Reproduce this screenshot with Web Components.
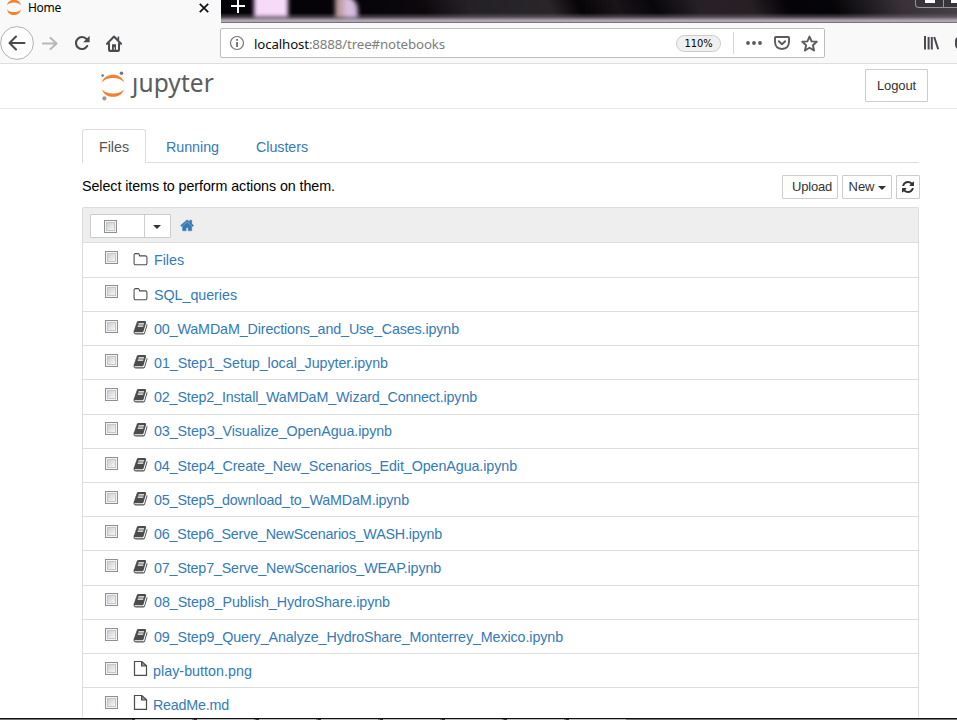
<!DOCTYPE html>
<html lang="en">
<head>
<meta charset="utf-8">
<title>Home</title>
<style>
html,body{margin:0;height:720px;overflow:hidden;background:#fff}
body{font-family:"Liberation Sans",Arial,sans-serif;font-size:14.3px;color:#000}
</style>
</head>
<body>
<browser-window></browser-window>
<script>
const define = (name, html, setup) => {
  const t = document.createElement('template');
  t.innerHTML = html;
  customElements.define(name, class extends HTMLElement {
    connectedCallback() {
      if (this.shadowRoot) return;
      const root = this.attachShadow({mode: 'open'});
      root.append(t.content.cloneNode(true));
      if (setup) setup(this, root);
    }
  });
};

/* Text run that spreads its tracking to fill a given width. */
define('fit-text', `<style>:host{display:inline-block;white-space:nowrap;line-height:1.2}span{display:inline-block}</style><span><slot></slot></span>`,
  (host, root) => {
    const s = root.querySelector('span'), w = +host.getAttribute('w');
    const n = host.textContent.length;
    if (w && n) { s.style.letterSpacing = ((w - s.getBoundingClientRect().width) / n) + 'px'; host.style.width = w + 'px'; }
  });

const ICONS = {
  home: ['0 0 1792 1792', '<path d="M1472 992v480q0 26-19 45t-45 19h-384v-384h-256v384h-384q-26 0-45-19t-19-45v-480q0-1 .5-3t.5-3l575-474 575 474q1 2 1 6zm223-69l-62 74q-8 9-21 11h-3q-13 0-21-7l-692-577-692 577q-12 8-24 7-13-2-21-11l-62-74q-8-10-7-23.5t11-21.5l719-599q32-26 76-26t76 26l244 204v-195q0-14 9-23t23-9h192q14 0 23 9t9 23v408l219 182q10 8 11 21.5t-7 23.5z" stroke="currentColor" stroke-width="50"/>'],
  folder: ['0 0 1792 1792', '<path d="M1600 1312v-704q0-40-28-68t-68-28h-704q-40 0-68-28t-28-68v-64q0-40-28-68t-68-28h-320q-40 0-68 28t-28 68v960q0 40 28 68t68 28h1216q40 0 68-28t28-68zm128-704v704q0 92-66 158t-158 66h-1216q-92 0-158-66t-66-158v-960q0-92 66-158t158-66h320q92 0 158 66t66 158v32h672q92 0 158 66t66 158z"/>'],
  book: ['0 0 1792 1792', '<path d="M1703 478q40 57 18 129l-275 906q-19 64-76.5 107.5t-122.5 43.5h-923q-77 0-148.5-53.5t-99.5-131.5q-24-67-2-127 0-4 3-27t4-37q1-8-3-21.5t-3-19.5q2-11 8-21t16.5-23.5 16.5-23.5q23-38 45-91.5t30-91.5q3-10 .5-30t-.5-28q3-11 17-28t17-23q21-36 42-92t25-90q1-9-2.5-32t.5-28q4-13 22-30.5t22-22.5q19-26 42.5-84.5t27.5-96.5q1-8-3-25.5t-2-26.5q2-8 9-18t18-23 17-21q8-12 16.5-30.5t15-35 16-36 19.5-32 26.5-23.5 36-11.5 47.5 5.5l-1 3q38-9 51-9h761q74 0 114 56t18 130l-274 906q-36 119-71.5 153.5t-128.5 34.5h-869q-27 0-38 15-11 16-1 43 24 70 144 70h923q29 0 56-15.5t35-41.5l300-987q7-22 5-57 38 15 59 43zm-1064 2q-4 13 2 22.5t20 9.5h608q13 0 25.5-9.5t16.5-22.5l21-64q4-13-2-22.5t-20-9.5h-608q-13 0-25.5 9.5t-16.5 22.5zm-83 256q-4 13 2 22.5t20 9.5h608q13 0 25.5-9.5t16.5-22.5l21-64q4-13-2-22.5t-20-9.5h-608q-13 0-25.5 9.5t-16.5 22.5z"/>'],
  refresh: ['0 0 1792 1792', '<path d="M1639 1056q0 5-1 7-64 268-268 434.5t-478 166.5q-146 0-282.5-55t-243.5-157l-129 129q-19 19-45 19t-45-19-19-45v-448q0-26 19-45t45-19h448q26 0 45 19t19 45-19 45l-137 137q71 66 161 102t187 36q134 0 250-65t186-179q11-17 53-117 8-23 30-23h192q13 0 22.5 9.5t9.5 22.5zm25-800v448q0 26-19 45t-45 19h-448q-26 0-45-19t-19-45 19-45l138-138q-148-137-349-137-134 0-250 65t-186 179q-11 17-53 117-8 23-30 23h-199q-13 0-22.5-9.5t-9.5-22.5v-7q65-268 270-434.5t480-166.5q146 0 284 55.5t245 156.5l130-129q19-19 45-19t45 19 19 45z"/>'],
  file: ['0 0 15 16', '<path d="M1.5 1.5H8.8L13.5 5.8V15.4H1.5Z M8.6 1.5V6H13.5" fill="none" stroke="currentColor" stroke-width="1.2"/><path d="M9 1.2L13.8 6H9Z" opacity=".55"/>'],
  caret: ['0 0 8 4', '<path d="M0 0H8L4 4Z"/>'],
  back: ['0 0 34 34', '<circle cx="17" cy="17" r="16.4" fill="#fff" stroke="#b1b1b3"/><path d="M24.5 17H10M16 10.5L9.5 17L16 23.5" fill="none" stroke="#4a4a4f" stroke-width="2.1" stroke-linecap="round" stroke-linejoin="round"/>'],
  forward: ['0 0 16 16', '<path d="M1 8H14M8.5 2L14.5 8L8.5 14" fill="none" stroke="#b8b8ba" stroke-width="2.1" stroke-linecap="round" stroke-linejoin="round"/>'],
  reload: ['0 0 16 16', '<path d="M12.6 4.2A6 6 0 1 0 13.2 11" fill="none" stroke="#4a4a4f" stroke-width="2.1" stroke-linecap="round"/><path d="M15.6 .8V7.2H9.2Z" fill="#4a4a4f"/>'],
  house: ['0 0 16 16', '<path d="M1 8.3L8 1.5L15 8.3M3 8V13.8Q3 14.9 4 14.9H12Q13 14.9 13 13.8V8" fill="none" stroke="#4a4a4f" stroke-width="2" stroke-linecap="round" stroke-linejoin="round"/><path d="M6 14V8.8H10V14H8.7V11.5H7.8V14Z" fill="#4a4a4f"/><path d="M11.5 1.5H13.2V5H11.5Z" fill="#4a4a4f"/>'],
  info: ['0 0 16 16', '<circle cx="8" cy="8" r="6.5" fill="none" stroke="#737373" stroke-width="1.2"/><path d="M7.1 7H9V12H7.1ZM7.1 4H9V5.8H7.1Z" fill="#737373"/>'],
  dots: ['0 0 16 4', '<circle cx="2" cy="2" r="1.9"/><circle cx="8" cy="2" r="1.9"/><circle cx="14" cy="2" r="1.9"/>'],
  pocket: ['0 0 16 14', '<path d="M1 1.8Q1 1 1.8 1H14.2Q15 1 15 1.8V6Q14.7 12.6 8 13Q1.3 12.6 1 6Z" fill="none" stroke="currentColor" stroke-width="1.9"/><path d="M4.8 5.2L8 8.3L11.2 5.2" fill="none" stroke="currentColor" stroke-width="1.9" stroke-linecap="round" stroke-linejoin="round"/>'],
  star: ['0 0 16 16', '<path d="M8 1.5L10 6L14.8 6.4L11.2 9.6L12.3 14.6L8 12L3.7 14.6L4.8 9.6L1.2 6.4L6 6Z" fill="none" stroke="currentColor" stroke-width="1.8" stroke-linejoin="round"/>'],
  library: ['0 0 16 14', '<path d="M0 0H2V13.5H0ZM3.6 1H5.6V13.5H3.6ZM6.8 1H8.8V13.5H6.8Z"/><path d="M10.2 1L14.2 13.2" stroke="currentColor" stroke-width="2"/>'],
  close: ['0 0 10 10', '<path d="M.8 .8L9.2 9.2M9.2 .8L.8 9.2" stroke="#111" stroke-width="1.7"/>'],
  plus: ['0 0 14 14', '<path d="M7 0V14M0 7H14" stroke="#fff" stroke-width="2"/>'],
  planet: ['0 0 24 30', '<path d="M1 11.4C3.5 1.3 20.5 1.3 23 11.4C18.5 5.6 5.5 5.6 1 11.4Z" fill="#f58030"/><path d="M1 18.2C3.5 28.4 20.5 28.4 23 18.2C18.5 24 5.5 24 1 18.2Z" fill="#f58030"/><circle cx="20.5" cy="2.2" r="1.8" fill="#767677"/><circle cx="1.6" cy="4.6" r="1.3" fill="#767677"/><circle cx="3.4" cy="27.4" r="2.1" fill="#9a9a9b"/>'],
  tabplanet: ['0 0 16 18', '<path d="M1 6.3C2.5-1.2 13.5-1.2 15 6.3C12 2.6 4 2.6 1 6.3Z" fill="#f58030"/><path d="M1 10.4C2.5 17.8 13.5 17.8 15 10.4C12 14 4 14 1 10.4Z" fill="#f58030"/>']
};
define('ui-icon', `<style>:host{display:block;flex:none}svg{display:block;width:100%;height:100%}</style>`, (host, root) => {
  const [box, body] = ICONS[host.getAttribute('name')];
  const [w, h] = host.getAttribute('size').split(' ');
  host.style.width = w + 'px'; host.style.height = h + 'px';
  root.innerHTML += `<svg viewBox="${box}" fill="currentColor" preserveAspectRatio="none">${body}</svg>`;
});

define('check-box', `<style>:host{display:block;flex:none;box-sizing:border-box;width:13px;height:13px;border:1px solid #8e8f8f;background:#f4f4f4;padding:1px}
i{display:block;box-sizing:border-box;width:9px;height:9px;border:1px solid #c3c7cc;background:linear-gradient(135deg,#cbcfd5,#f6f6f6)}</style><i></i>`);

define('tab-strip', `<style>
:host{display:flex;height:23px;background:#f9f9fa;overflow:hidden;font-family:"Noto Sans","Open Sans",sans-serif;font-size:12px}
.tab{width:221px;display:flex;align-items:flex-start;box-sizing:border-box;padding-left:6px}
.tab fit-text{margin:0 0 0 6px;line-height:16px}
.x{margin:3px 0 0 138px}
.aero{flex:1;display:flex;justify-content:space-between;position:relative;overflow:hidden;border-bottom:1px solid #77707c;
background:linear-gradient(#0000 13px,#75697499 17px,#a99dab 20px,#b6a9b8 22px),
linear-gradient(65deg,#050308 0 18%,#0b090c 28%,#242126 34%,#29262a 45%,#060407 49%,#171518 54%,#08060a 59%,#252126 65%,#242024 72%,#050307 77%,#050407 83%,#353136 92%,#454146 100%)}
.glow{position:absolute;filter:blur(2px);top:-5px;left:33px;width:34px;height:22px;background:#f6daf8}
.glow.two{left:114px;top:-4px;width:23px;height:22px;border-radius:2px 14px 0 0;background:linear-gradient(90deg,#a98984,#dfc3e4 60%,#c3a9cf)}
.plus{margin:-1px 0 0 10px;position:relative}
.win{box-sizing:border-box;width:43px;height:8px;margin-right:-1px;border:1px solid #99949c;border-top:0;border-radius:0 0 0 4px;background:#38343a;display:flex;position:relative}
.win b{width:28px;flex:none;box-sizing:border-box;border-right:1px solid #99949c;display:flex;justify-content:center}
.win i{width:10px;height:3px;background:#fff}.win em{width:7px;height:3px;background:#fff;margin-left:7px}
</style><div class="tab"><ui-icon name="tabplanet" size="16 18" style="margin-top:-1px"></ui-icon><fit-text w="33">Home</fit-text><ui-icon class="x" name="close" size="10 10"></ui-icon></div>
<div class="aero"><div class="glow"></div><div class="glow two"></div><ui-icon class="plus" name="plus" size="14 14"></ui-icon><div class="win"><b><i></i></b><em></em></div></div>`);

define('nav-bar', `<style>
:host{display:flex;box-sizing:border-box;height:41px;background:#f9f9fa;border-bottom:1px solid #dedee0;align-items:flex-start;font-family:"Noto Sans","Open Sans",sans-serif;font-size:13.3px;color:#5b5b5f;overflow:hidden}
.url{display:flex;flex:none;align-items:center;box-sizing:border-box;width:605px;height:30px;margin:5px 0 0 98px;border:1px solid #bebebe;border-radius:2px;background:#fff;padding-left:8px}
.url fit-text{flex:none;color:#7d7d7d;margin:3px 0 0 9px}.url span{color:#0c0c0d}
.zoom{box-sizing:border-box;flex:none;width:45px;height:17px;border:1px solid #ccc;border-radius:9px;background:#f0f0f0;margin-left:231px;display:flex;justify-content:center;align-items:center;font:11px "DejaVu Sans Condensed","DejaVu Sans",sans-serif;color:#000}
.url .zoom fit-text{margin:1px 0 0;color:#000}
.sep{width:1px;flex:none;height:22px;background:#d7d7db;margin:0 12px 0 12px}
.menu{width:8px;height:12px;border:2px solid #4a4a4f;border-radius:4px;margin:14px 0 0 15px;box-sizing:border-box;flex:none}
</style>
<ui-icon name="back" size="34 34" style="margin-top:3px"></ui-icon><ui-icon name="forward" size="16 15" style="margin:13px 0 0 8px"></ui-icon><ui-icon name="reload" size="16 16" style="margin:12px 0 0 16px"></ui-icon><ui-icon name="house" size="16 17" style="margin:12px 0 0 16px"></ui-icon>
<div class="url"><ui-icon name="info" size="16 16"></ui-icon><fit-text w="191"><span>localhost</span>:8888/tree#notebooks</fit-text><div class="zoom"><fit-text w="28">110%</fit-text></div><div class="sep"></div><ui-icon name="dots" size="16 4"></ui-icon><ui-icon name="pocket" size="16 14" style="margin-left:12px"></ui-icon><ui-icon name="star" size="17 17" style="margin-left:11px"></ui-icon></div>
<ui-icon name="library" size="16 14" style="margin:13px 0 0 99px;color:#4a4a4f"></ui-icon><div class="menu"></div>`);

define('jupyter-header', `<style>
:host{display:flex;box-sizing:border-box;height:45px;border-bottom:1px solid #e7e7e7;padding:5px 29px 0 101px;align-items:flex-start}
.word{font:24.5px/34px "Noto Sans","Open Sans",sans-serif;color:#5c5c5d;margin:-3px 0 0 7px}
.word fit-text{line-height:34px}
.j{display:inline-block;clip-path:inset(12px -3px -3px -5px)}
</style><ui-icon name="planet" size="24 30" style="margin-top:2px"></ui-icon><div class="word"><fit-text w="82"><span class="j">j</span>upyter</fit-text></div>
<ui-button style="margin-left:auto;--w:63px;--h:33px;--f:13px"><fit-text w="39">Logout</fit-text></ui-button>`);

define('ui-button', `<style>:host{display:flex;flex:none;box-sizing:border-box;width:var(--w);height:var(--h);border:1px solid #ccc;border-radius:1px;background:#fff;color:#333;font-size:var(--f,13px);align-items:center;justify-content:center;gap:3px}</style><slot></slot>`);

define('page-tabs', `<style>
:host{display:flex;height:34px;box-sizing:border-box;border-bottom:1px solid #ddd;color:#337ab7}
div{padding:10px 0 0;box-sizing:border-box;height:34px}
.on{width:64px;border:1px solid #ddd;border-bottom:0;border-radius:3px 3px 0 0;background:#fff;color:#555;padding:9px 0 0 16px}
</style><div class="on"><fit-text w="30">Files</fit-text></div><div style="margin-left:20px"><fit-text w="53">Running</fit-text></div><div style="margin-left:37px"><fit-text w="52">Clusters</fit-text></div>`);

define('action-bar', `<style>:host{display:flex;height:44px;box-sizing:border-box;padding-top:12px;align-items:flex-start;margin-right:-1px;gap:4px}
.note{margin-top:3px;margin-right:auto}</style>
<fit-text class="note" w="253">Select items to perform actions on them.</fit-text>
<ui-button style="--w:56px;--h:24px"><fit-text w="40" style="margin-left:4px">Upload</fit-text></ui-button>
<ui-button style="--w:50px;--h:24px"><fit-text w="26">New</fit-text><ui-icon name="caret" size="8 4" style="margin-top:2px"></ui-icon></ui-button>
<ui-button style="--w:24px;--h:24px"><ui-icon name="refresh" size="14 14"></ui-icon></ui-button>`);

define('list-header', `<style>
:host{display:flex;height:35px;box-sizing:border-box;background:#eee;padding:6px 0 0 7px;align-items:flex-start}
.sel{display:flex;box-sizing:border-box;width:81px;height:24px;border:1px solid #ccc;background:#fff;border-radius:1px}
.a{border-right:1px solid #ccc;padding:5px 0 0 13px;width:40px}
.b{flex:1;display:flex;align-items:center;color:#333;padding:1px 0 0 8px}
</style><div class="sel"><div class="a"><check-box></check-box></div><div class="b"><ui-icon name="caret" size="8 4"></ui-icon></div></div><ui-icon name="home" size="14.3 15" style="color:#337ab7;margin:4px 0 0 9px"></ui-icon>`);

define('file-row', `<style>
:host{display:flex;box-sizing:border-box;border-top:1px solid #ddd;padding-left:22px;align-items:flex-start;color:#337ab7}
ui-icon{color:#4c4c4c}
.item{display:flex;align-items:flex-start;margin-left:15px}
</style>`, (host, root) => {
  const kind = host.getAttribute('kind');
  const lift = +host.getAttribute('lift');
  const top = {file: 6, book: 8, folder: 9}[kind] - (lift > 1 ? 1 : 0);
  const box = document.createElement('check-box');
  box.style.marginTop = (lift ? 7 : 8) + 'px';
  const item = document.createElement('div');
  item.className = 'item';
  item.innerHTML = `<ui-icon name="${kind}" size="${kind === 'file' ? '15 16' : '15 15.5'}" style="margin-top:${top}px"></ui-icon><fit-text w="${host.getAttribute('w')}" style="margin:${lift > 1 ? 8 : 9}px 0 0 ${kind === 'file' ? 5 : 6}px">${host.getAttribute('label')}</fit-text>`;
  root.append(box, item);
});

/* icon, label, label width, row height, upward rounding of the contents */
const FILES = [
  ['folder','Files',30,35,0],['folder','SQL_queries',83,34,1],
  ['book','00_WaMDaM_Directions_and_Use_Cases.ipynb',305,34,0],
  ['book','01_Step1_Setup_local_Jupyter.ipynb',234,34,0],
  ['book','02_Step2_Install_WaMDaM_Wizard_Connect.ipynb',323,35,0],
  ['book','03_Step3_Visualize_OpenAgua.ipynb',238,34,2],
  ['book','04_Step4_Create_New_Scenarios_Edit_OpenAgua.ipynb',363,34,0],
  ['book','05_Step5_download_to_WaMDaM.ipynb',255,34,0],
  ['book','06_Step6_Serve_NewScenarios_WASH.ipynb',288,34,0],
  ['book','07_Step7_Serve_NewScenarios_WEAP.ipynb',287,35,0],
  ['book','08_Step8_Publish_HydroShare.ipynb',236,34,2],
  ['book','09_Step9_Query_Analyze_HydroShare_Monterrey_Mexico.ipynb',409,34,0],
  ['file','play-button.png',99,34,0],['file','ReadMe.md',76,30,0]
];
define('file-list', `<style>:host{display:block;box-sizing:border-box;height:510px;border:1px solid #ddd;border-bottom:0;border-radius:2px 2px 0 0;overflow:hidden}</style>
<list-header style="height:34px"></list-header>${FILES.map(([k,l,w,h,u]) => `<file-row kind="${k}" label="${l}" w="${w}" lift="${u}" style="height:${h}px"></file-row>`).join('')}`);

define('task-edge', `<style>:host{display:block;height:2px;margin-top:1px}
b{display:block;height:1px;background:#111}
i{display:block;height:1px;background:repeating-linear-gradient(90deg,#777 0 2px,#333 2px 5px,#bbb 5px 62px) 130px 0/496px 1px no-repeat,#79727a}</style><b></b><i></i>`);

define('browser-window', `<style>:host{display:block;width:957px;height:720px;overflow:hidden;background:#fff}
main{margin:20px 38px 0 82px}</style>
<tab-strip></tab-strip><nav-bar></nav-bar><jupyter-header></jupyter-header>
<main><page-tabs></page-tabs><action-bar></action-bar><file-list></file-list></main><task-edge></task-edge>`);
</script>
</body>
</html>
